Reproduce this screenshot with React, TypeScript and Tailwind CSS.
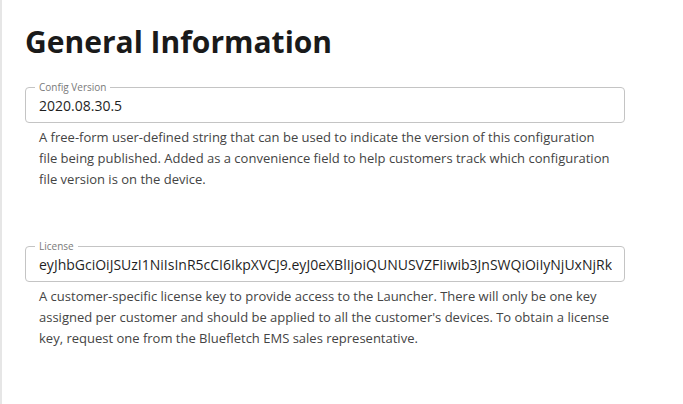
const LICENSE =
  "eyJhbGciOiJSUzI1NiIsInR5cCI6IkpXVCJ9.eyJ0eXBlIjoiQUNUSVZFIiwib3JnSWQiOiIyNjUxNjRkMDQ4ZjEtNDk3Yi1hZDYwLWQ2NzM4ZDY3NTYxOCJ9"

function Field({ label, value, help }: { label: string; value: string; help: string }) {
  return (
    <div className="flex flex-col">
      <fieldset className="m-0 min-w-0 rounded-[4px] border border-[#c4c4c4] pb-[6px] pl-[9px] pr-[12px]">
        <legend className="px-[4px] text-[10px] leading-[10px] text-[#7a7a7a]">{label}</legend>
        <div className="overflow-hidden whitespace-nowrap pl-[4px] pt-[4px] text-[14px] leading-[20px] text-[#1f1f1f]">
          {value}
        </div>
      </fieldset>
      <p className="mt-[4px] px-[14px] text-[13px] leading-[21px] text-[#444]">{help}</p>
    </div>
  )
}

export default function App() {
  return (
    <div
      className="min-h-[404px] w-[683px] border-l-2 border-[#e6e6e6] bg-white"
      style={{ fontFamily: '"Open Sans", sans-serif' }}
    >
      <div className="w-[623px] pl-[23px] pt-[22px]">
        <h1 className="text-[30px] font-bold leading-[40px] text-[#1a1a1a]">General Information</h1>
        <div className="mt-[20px]">
          <Field
            label="Config Version"
            value="2020.08.30.5"
            help="A free-form user-defined string that can be used to indicate the version of this configuration file being published. Added as a convenience field to help customers track which configuration file version is on the device."
          />
        </div>
        <div className="mt-[51px]">
          <Field
            label="License"
            value={LICENSE}
            help="A customer-specific license key to provide access to the Launcher. There will only be one key assigned per customer and should be applied to all the customer's devices. To obtain a license key, request one from the Bluefletch EMS sales representative."
          />
        </div>
      </div>
    </div>
  )
}
